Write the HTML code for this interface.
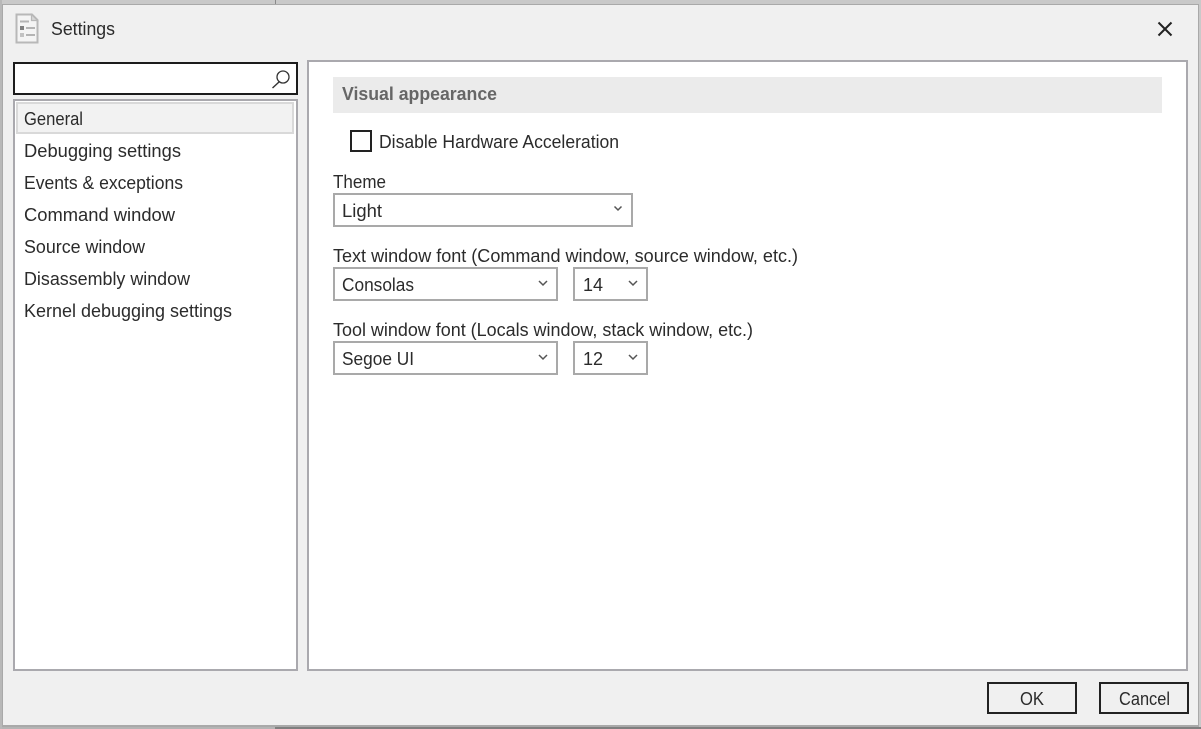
<!DOCTYPE html>
<html><head><meta charset="utf-8"><title>Settings</title>
<style>
html,body{margin:0;padding:0;width:1201px;height:729px;overflow:hidden;background:#f0f0f0}
svg{display:block}
text{font-family:"Liberation Sans",sans-serif;font-size:18px;fill:#2b2b2b}
</style></head><body>
<svg width="1201" height="729" viewBox="0 0 1201 729" xmlns="http://www.w3.org/2000/svg">
<rect width="1201" height="729" fill="#c9c9c9"/>
<rect x="275" y="0" width="1" height="4" fill="#8a8a8a"/>
<rect x="275" y="727" width="926" height="2" fill="#7f7f7f"/>
<rect x="0" y="727" width="275" height="2" fill="#b4b4b4"/>
<rect x="0" y="0" width="2" height="729" fill="#b8b8b8"/>
<rect x="2" y="4" width="1197" height="723" fill="#a9a9a9"/>
<rect x="3" y="5" width="1195" height="720" fill="#f0f0f0"/>

<!-- title icon -->
<g>
<path d="M16.5 14.5H32L37.5 20V42.5H16.5Z" fill="#f4f4f4" stroke="#b8b8b8" stroke-width="2"/>
<path d="M31.5 14.5V20.5H37.5Z" fill="#d8d8d8" stroke="#b8b8b8" stroke-width="1.2"/>
<rect x="20" y="20.5" width="9" height="2" fill="#b4b4b4"/>
<rect x="20" y="26" width="4" height="4" fill="#808080"/>
<rect x="26" y="27" width="9" height="2" fill="#b4b4b4"/>
<rect x="20" y="33" width="4" height="4" fill="#c2c2c2"/>
<rect x="26" y="34" width="9" height="2" fill="#b4b4b4"/>
</g>
<text x="51" y="35" textLength="64" lengthAdjust="spacingAndGlyphs">Settings</text>

<!-- close -->
<path d="M1158.5 22.5L1171.5 35.5M1171.5 22.5L1158.5 35.5" stroke="#222" stroke-width="2" fill="none"/>

<!-- search -->
<rect x="14" y="63" width="283" height="31" fill="#fff" stroke="#1c1c1c" stroke-width="2"/>
<circle cx="283" cy="77" r="6" fill="none" stroke="#333" stroke-width="1.3"/>
<path d="M279 82L272.5 88" stroke="#333" stroke-width="1.4" fill="none"/>

<!-- list -->
<rect x="14" y="100" width="283" height="570" fill="#fff" stroke="#aaa9ae" stroke-width="2"/>
<rect x="17" y="103" width="276" height="30" fill="#f2f2f2" stroke="#d9d9d9" stroke-width="2"/>
<text x="24" y="125" textLength="59" lengthAdjust="spacingAndGlyphs">General</text>
<text x="24" y="157" textLength="157" lengthAdjust="spacingAndGlyphs">Debugging settings</text>
<text x="24" y="189" textLength="159" lengthAdjust="spacingAndGlyphs">Events &amp; exceptions</text>
<text x="24" y="221" textLength="151" lengthAdjust="spacingAndGlyphs">Command window</text>
<text x="24" y="253" textLength="121" lengthAdjust="spacingAndGlyphs">Source window</text>
<text x="24" y="285" textLength="166" lengthAdjust="spacingAndGlyphs">Disassembly window</text>
<text x="24" y="317" textLength="208" lengthAdjust="spacingAndGlyphs">Kernel debugging settings</text>

<!-- right panel -->
<rect x="308" y="61" width="879" height="609" fill="#fff" stroke="#aaa9ae" stroke-width="2"/>
<rect x="333" y="77" width="829" height="36" fill="#ebebeb"/>
<text x="342" y="100" textLength="155" lengthAdjust="spacingAndGlyphs" font-weight="700" style="fill:#666;font-weight:700">Visual appearance</text>

<rect x="351" y="131" width="20" height="20" fill="#fff" stroke="#222" stroke-width="2"/>
<text x="379" y="148" textLength="240" lengthAdjust="spacingAndGlyphs">Disable Hardware Acceleration</text>

<text x="333" y="188" textLength="53" lengthAdjust="spacingAndGlyphs">Theme</text>
<rect x="334" y="194" width="298" height="32" fill="#fff" stroke="#a9a9a9" stroke-width="2"/>
<text x="342" y="217" textLength="40" lengthAdjust="spacingAndGlyphs">Light</text>
<path d="M614.5 206.5L618 210L621.5 206.5" fill="none" stroke="#555" stroke-width="1.5"/>

<text x="333" y="262" textLength="465" lengthAdjust="spacingAndGlyphs">Text window font (Command window, source window, etc.)</text>
<rect x="334" y="268" width="223" height="32" fill="#fff" stroke="#a9a9a9" stroke-width="2"/>
<text x="342" y="291" textLength="72" lengthAdjust="spacingAndGlyphs">Consolas</text>
<path d="M539 281L543 285L547 281" fill="none" stroke="#555" stroke-width="1.5"/>
<rect x="574" y="268" width="73" height="32" fill="#fff" stroke="#a9a9a9" stroke-width="2"/>
<text x="583" y="291" textLength="20" lengthAdjust="spacingAndGlyphs">14</text>
<path d="M629 281L633 285L637 281" fill="none" stroke="#555" stroke-width="1.5"/>

<text x="333" y="336" textLength="420" lengthAdjust="spacingAndGlyphs">Tool window font (Locals window, stack window, etc.)</text>
<rect x="334" y="342" width="223" height="32" fill="#fff" stroke="#a9a9a9" stroke-width="2"/>
<text x="342" y="365" textLength="72" lengthAdjust="spacingAndGlyphs">Segoe UI</text>
<path d="M539 355L543 359L547 355" fill="none" stroke="#555" stroke-width="1.5"/>
<rect x="574" y="342" width="73" height="32" fill="#fff" stroke="#a9a9a9" stroke-width="2"/>
<text x="583" y="365" textLength="20" lengthAdjust="spacingAndGlyphs">12</text>
<path d="M629 355L633 359L637 355" fill="none" stroke="#555" stroke-width="1.5"/>

<!-- buttons -->
<rect x="988" y="683" width="88" height="30" fill="#f0f0f0" stroke="#222" stroke-width="2"/>
<text x="1020" y="705" textLength="24" lengthAdjust="spacingAndGlyphs">OK</text>
<rect x="1100" y="683" width="88" height="30" fill="#f0f0f0" stroke="#222" stroke-width="2"/>
<text x="1119" y="705" textLength="51" lengthAdjust="spacingAndGlyphs">Cancel</text>
</svg>
</body></html>
